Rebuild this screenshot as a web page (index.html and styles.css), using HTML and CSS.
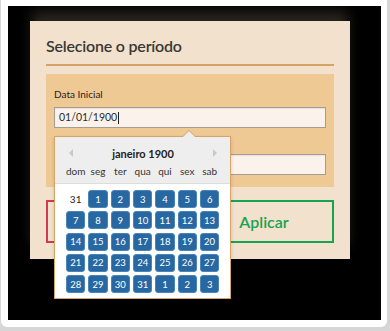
FILE: index.html
```html
<!DOCTYPE html>
<html lang="pt">
<head>
<meta charset="utf-8">
<link rel="stylesheet" href="styles.css">
</head>
<body>
<div class="card">
  <div class="overlay">
    <div class="modal">
      <h2 class="title">Selecione o período</h2>
      <div class="rule"></div>
      <div class="fields">
        <div class="label">Data Inicial</div>
        <div class="input">01/01/1900<span class="caret"></span></div>
        <div class="label">Data Final</div>
        <div class="input"></div>
      </div>
      <div class="actions">
        <div class="btn btn-cancel">Cancelar</div>
        <div class="btn btn-apply">Aplicar</div>
      </div>

      <div class="picker">
        <div class="picker-head">
          <div class="head-row">
            <span class="arrow arrow-left"></span>
            <span class="month">janeiro 1900</span>
            <span class="arrow arrow-right"></span>
          </div>
          <div class="grid dow">
            <span>dom</span><span>seg</span><span>ter</span><span>qua</span><span>qui</span><span>sex</span><span>sab</span>
          </div>
        </div>
        <div class="grid days">
          <span class="day old">31</span>
          <span class="day">1</span><span class="day">2</span><span class="day">3</span><span class="day">4</span><span class="day">5</span><span class="day">6</span>
          <span class="day">7</span><span class="day">8</span><span class="day">9</span><span class="day">10</span><span class="day">11</span><span class="day">12</span><span class="day">13</span>
          <span class="day">14</span><span class="day">15</span><span class="day">16</span><span class="day">17</span><span class="day">18</span><span class="day">19</span><span class="day">20</span>
          <span class="day">21</span><span class="day">22</span><span class="day">23</span><span class="day">24</span><span class="day">25</span><span class="day">26</span><span class="day">27</span>
          <span class="day">28</span><span class="day">29</span><span class="day">30</span><span class="day">31</span><span class="day">1</span><span class="day">2</span><span class="day">3</span>
        </div>
      </div>
    </div>
  </div>
</div>
</body>
</html>
```

FILE: styles.css
```css
html, body {
  margin: 0;
  padding: 0;
}
body {
  width: 390px;
  height: 331px;
  overflow: hidden;
  background: #d6d6d6;
  font-family: Lato, "Open Sans", sans-serif;
}
.card {
  width: 386px;
  height: 327px;
  margin-left: 1px;
  box-sizing: border-box;
  background: #ffffff;
  border-radius: 0 0 6px 6px;
  padding: 6px 6px 7px 7px;
}
.overlay {
  background: #000;
  height: 314px;
  box-sizing: border-box;
  padding: 15px 0 0 22px;
  overflow: hidden;
}
.modal {
  position: relative;
  width: 320px;
  height: 238px;
  box-sizing: border-box;
  padding: 14px 16px 0;
  background: #f2e1cc;
  box-shadow: 0 -12px 12px -2px rgba(44, 40, 36, 0.9);
}
.title {
  margin: 0;
  font-size: 16px;
  line-height: 22px;
  font-weight: 600;
  letter-spacing: -0.2px;
  color: #3a3836;
}
.rule {
  height: 2px;
  background: #d8a266;
  margin-top: 7px;
}
.fields {
  margin-top: 8px;
  background: #efc994;
  padding: 13px 8px 12px;
}
.label {
  font-size: 10px;
  line-height: 14px;
  color: #1e1e1e;
  margin-bottom: 6px;
}
.input {
  height: 21px;
  box-sizing: border-box;
  background: #fbf3eb;
  border: 1px solid #a39d96;
  box-shadow: inset 0 1px 1px rgba(0, 0, 0, 0.08);
  padding-left: 4px;
  font-size: 10.5px;
  line-height: 19px;
  color: #2a2a2a;
  margin-bottom: 6px;
  display: flex;
  align-items: center;
}
.input:last-child {
  margin-bottom: 0;
}
.caret {
  display: inline-block;
  width: 1px;
  height: 12px;
  background: #222;
  margin-left: 1px;
}
.actions {
  display: flex;
  gap: 8px;
  margin-top: 13px;
}
.btn {
  flex: 1;
  height: 43px;
  box-sizing: border-box;
  border: 2px solid;
  display: flex;
  align-items: center;
  justify-content: center;
  font-size: 16px;
  font-weight: 600;
}
.btn-cancel {
  border-color: #d23a50;
  color: #d23a50;
}
.btn-apply {
  border-color: #16a352;
  color: #16a352;
}

/* datepicker popup */
.picker {
  position: absolute;
  left: 24px;
  top: 115px;
  width: 177px;
  height: 163px;
  box-sizing: border-box;
  border: 1px solid #d6a465;
  background: #fff;
  box-shadow: 0 2px 4px rgba(0, 0, 0, 0.15);
}
.picker::before,
.picker::after {
  content: "";
  position: absolute;
  width: 0;
  height: 0;
  border-style: solid;
}
.picker::before {
  left: 127px;
  top: -7px;
  border-width: 0 7px 7px 7px;
  border-color: transparent transparent #d6a465 transparent;
}
.picker::after {
  left: 128px;
  top: -6px;
  border-width: 0 6px 6px 6px;
  border-color: transparent transparent #eeeeee transparent;
}
.picker-head {
  background: #eeeeee;
  height: 47px;
  box-sizing: border-box;
  padding: 5px 10px 0 11px;
  border-bottom: 1px solid #dcdcdc;
}
.head-row {
  height: 22px;
  display: flex;
  align-items: center;
  justify-content: space-between;
  padding: 0 3px 0 3px;
}
.month {
  font-size: 11px;
  font-weight: 700;
  color: #222;
}
.arrow {
  width: 0;
  height: 0;
  border-style: solid;
}
.arrow-left {
  border-width: 4px 4px 4px 0;
  border-color: transparent #c9c9c9 transparent transparent;
}
.arrow-right {
  border-width: 4px 0 4px 4px;
  border-color: transparent transparent transparent #c9c9c9;
}
.grid {
  display: grid;
  grid-template-columns: repeat(7, 19.33px);
  column-gap: 3px;
}
.dow {
  height: 14px;
  align-items: center;
  font-size: 10px;
  color: #333;
}
.dow span {
  text-align: center;
  white-space: nowrap;
  justify-self: center;
}
.days {
  padding: 6px 0 0 11px;
  grid-auto-rows: 18px;
  row-gap: 3.25px;
}
.day {
  display: flex;
  align-items: center;
  justify-content: center;
  font-size: 9.5px;
  color: #fff;
  background: #2768a3;
  border: 1px solid #4b84b8;
  border-radius: 3px;
  box-sizing: border-box;
}
.day.old {
  background: transparent;
  border-color: transparent;
  color: #222;
  font-size: 10px;
}
```
